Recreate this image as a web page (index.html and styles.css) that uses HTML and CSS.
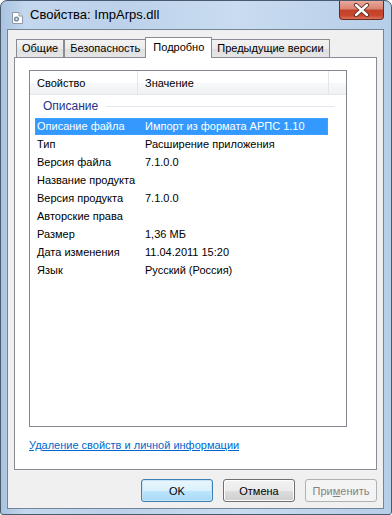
FILE: index.html
```html
<!DOCTYPE html>
<html>
<head>
    <title>Свойства: ImpArps.dll</title>
    <link rel="stylesheet" href="styles.css">
</head>
<body>
    <div class="window">
        <div class="titlebar">
            <svg class="title-icon" width="11" height="12" viewBox="0 0 11 12">
                <path d="M0.5 0.5 H7 L10.5 4 V11.5 H0.5 Z" fill="#fff" stroke="#8d99a8"/>
                <path d="M7 0.5 V4 H10.5" fill="#e6eaef" stroke="#8d99a8"/>
                <circle cx="4.5" cy="7" r="2.6" fill="#7d8fa6"/>
                <circle cx="4.5" cy="7" r="1" fill="#e8edf3"/>
            </svg>
            <span class="title">Свойства: ImpArps.dll</span>
            <div class="close-button">
                <svg width="17" height="14" viewBox="0 0 17 14">
                    <path d="M3 2 L14 12 M14 2 L3 12" stroke="#5a2a22" stroke-width="4.2" stroke-linecap="round"/>
                    <path d="M3 2 L14 12 M14 2 L3 12" stroke="#fff" stroke-width="2.4" stroke-linecap="round"/>
                </svg>
            </div>
        </div>

        <div class="client">
            <div class="tabs">
                <div class="tab">Общие</div>
                <div class="tab">Безопасность</div>
                <div class="tab active">Подробно</div>
                <div class="tab">Предыдущие версии</div>
            </div>

            <div class="panel">
                <div class="list">
                    <div class="list-head">
                        <div class="col-name">Свойство</div>
                        <div class="col-value">Значение</div>
                        <div class="col-rest"></div>
                    </div>
                    <div class="group">
                        <span class="group-title">Описание</span>
                        <div class="group-line"></div>
                    </div>
                    <div class="row selected"><span class="name">Описание файла</span><span class="value">Импорт из формата АРПС 1.10</span></div>
                    <div class="row"><span class="name">Тип</span><span class="value">Расширение приложения</span></div>
                    <div class="row"><span class="name">Версия файла</span><span class="value">7.1.0.0</span></div>
                    <div class="row"><span class="name">Название продукта</span><span class="value"></span></div>
                    <div class="row"><span class="name">Версия продукта</span><span class="value">7.1.0.0</span></div>
                    <div class="row"><span class="name">Авторские права</span><span class="value"></span></div>
                    <div class="row"><span class="name">Размер</span><span class="value">1,36 МБ</span></div>
                    <div class="row"><span class="name">Дата изменения</span><span class="value">11.04.2011 15:20</span></div>
                    <div class="row"><span class="name">Язык</span><span class="value">Русский (Россия)</span></div>
                </div>
                <a class="remove-link" href="#">Удаление свойств и личной информации</a>
            </div>

            <div class="buttons">
                <button class="btn default">OK</button>
                <button class="btn">Отмена</button>
                <button class="btn" disabled>При<u>м</u>енить</button>
            </div>
        </div>
    </div>
</body>
</html>
```

FILE: styles.css
```css
body {
    margin: 0;
    padding: 0;
    font-family: "Liberation Sans", Arial, sans-serif;
    font-size: 11px;
    color: #000;
    background: #fff;
}

.window {
    width: 392px;
    height: 515px;
    box-sizing: border-box;
    border: 1px solid #4a5a6e;
    border-radius: 7px 7px 3px 3px;
    padding: 0 7px 5px 6px;
    background: linear-gradient(90deg, #a9c3df 0%, #c3d7ee 6%, #bcd2ea 30%, #c9dcf0 60%, #b7cee8 100%);
    display: flex;
    flex-direction: column;
}

.titlebar {
    height: 28px;
    display: flex;
    align-items: flex-start;
}

.title-icon {
    margin: 11px 0 0 5px;
}

.title {
    margin: 6px 0 0 7px;
    font-size: 13px;
    color: #000;
}

.close-button {
    margin-left: auto;
    width: 45px;
    height: 19px;
    box-sizing: border-box;
    border: 1px solid #6b2a20;
    border-top: none;
    border-radius: 0 0 4px 4px;
    background: linear-gradient(#e9a99b 0%, #d9826f 45%, #c24128 50%, #c9462d 80%, #d9735a 100%);
    display: flex;
    align-items: center;
    justify-content: center;
}

.client {
    flex: 1;
    box-sizing: border-box;
    border: 1px solid #74859a;
    background: #f0f0f0;
    display: flex;
    flex-direction: column;
}

.tabs {
    height: 27px;
    padding-left: 8px;
    display: flex;
    align-items: flex-end;
}

.tab {
    height: 17px;
    line-height: 17px;
    padding: 0 5px;
    border: 1px solid #898c95;
    border-bottom: none;
    background: linear-gradient(#f3f3f3, #ebebeb 50%, #dedede 51%, #e6e6e6);
    white-space: nowrap;
}

.tab.active {
    height: 20px;
    line-height: 18px;
    margin: 0 -1px -1px -1px;
    padding: 0 7px;
    background: #fff;
    position: relative;
    z-index: 1;
}

.panel {
    height: 413px;
    box-sizing: border-box;
    margin: 0 6px 0 6px;
    border: 1px solid #898c95;
    background: #fff;
    padding: 12px 0 0 14px;
}

.list {
    width: 318px;
    height: 357px;
    box-sizing: border-box;
    border: 1px solid #828790;
}

.list-head {
    height: 24px;
    display: flex;
    background: linear-gradient(#fff, #fff 50%, #f7f8fa 51%, #f1f2f4);
    border-bottom: 1px solid #e5e7ea;
    box-sizing: border-box;
}

.col-name,
.col-value {
    line-height: 24px;
    padding-left: 7px;
    box-sizing: border-box;
    border-right: 1px solid #e3e5e8;
}

.col-name {
    width: 108px;
}

.col-value {
    width: 191px;
}

.col-rest {
    flex: 1;
}

.group {
    height: 22px;
    display: flex;
    align-items: center;
    padding: 0 11px 0 13px;
}

.group-title {
    color: #1e3287;
    font-size: 12px;
}

.group-line {
    flex: 1;
    height: 1px;
    margin-left: 8px;
    background: #e2e6ee;
}

.row {
    display: flex;
    width: 293px;
    height: 17px;
    line-height: 17px;
    margin: 1px 0 0 5px;
    white-space: nowrap;
}

.row .name {
    width: 108px;
    padding-left: 2px;
    flex-shrink: 0;
}

.row.selected {
    background: #3399ff;
    color: #fff;
    outline: 1px dotted #c9874e;
    outline-offset: -1px;
}

.remove-link {
    display: inline-block;
    margin-top: 12px;
    color: #0066cc;
    text-decoration: underline;
}

.buttons {
    display: flex;
    justify-content: flex-end;
    gap: 10px;
    margin: 9px 6px 0 0;
}

.btn {
    width: 72px;
    height: 23px;
    padding: 0;
    font-family: "Liberation Sans", Arial, sans-serif;
    font-size: 11px;
    color: #000;
    border: 1px solid #707070;
    border-radius: 3px;
    background: linear-gradient(#f2f2f2, #ebebeb 50%, #dddddd 51%, #cfcfcf);
    box-shadow: inset 0 0 0 1px #fcfcfc;
}

.btn.default {
    border-color: #3c7fb1;
    background: linear-gradient(#eaf6fd, #d9f0fc 50%, #bee6fd 51%, #a7d9f5);
    box-shadow: inset 0 0 0 1px #c6e4f6;
}

.btn:disabled {
    color: #838383;
    border-color: #adb2b5;
    background: #f4f4f4;
    box-shadow: none;
}
```
